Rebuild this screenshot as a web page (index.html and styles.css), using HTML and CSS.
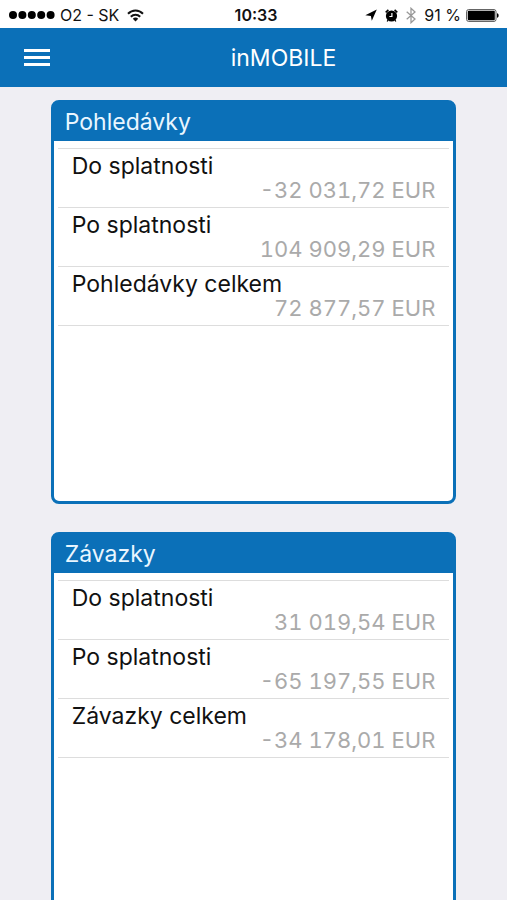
FILE: index.html
```html
<!DOCTYPE html>
<html lang="cs">
<head>
<meta charset="utf-8">
<meta name="viewport" content="width=device-width, initial-scale=1">
<title>inMOBILE</title>
<link rel="stylesheet" href="styles.css">
</head>
<body>
<div class="statusbar">
  <div class="status-side">
    <svg class="dots" width="47" height="10" viewBox="0 0 47 10" aria-hidden="true">
      <circle cx="5" cy="5" r="4"/><circle cx="14.4" cy="5" r="4"/><circle cx="23.8" cy="5" r="4"/><circle cx="33.2" cy="5" r="4"/><circle cx="42.6" cy="5" r="4"/>
    </svg>
    <span class="carrier">O2 - SK</span>
    <svg class="wifi" width="17" height="13" viewBox="0 0 17 13" fill="none" stroke="#111" stroke-width="2" aria-hidden="true">
      <path d="M1 4.8C5.2.5 11.8.5 16 4.8"/><path d="M3.8 7.7c2.7-2.7 6.7-2.7 9.4 0"/><path d="M8.5 12.4 5.8 9.7c1.5-1.5 3.9-1.5 5.4 0z" fill="#111" stroke="none"/>
    </svg>
  </div>
  <span class="clock">10:33</span>
  <div class="status-side status-right">
    <svg width="12" height="12" viewBox="0 0 12 12" aria-hidden="true"><path d="M11.8.4 6.8 11.8 5.9 6.9.3 6.3z"/></svg>
    <svg class="alarm" width="13" height="13" viewBox="0 0 13 13" aria-hidden="true">
      <circle cx="6.5" cy="7" r="5.6"/><path d="M.7 3.4 3.4.9M12.3 3.4 9.6.9" stroke="#000" stroke-width="1.6"/><path d="M3 11.2l-.8 1.3M10 11.2l.8 1.3" stroke="#000" stroke-width="1.3"/><path d="M6.9 3.9v3.6H4.4" fill="none" stroke="#fff" stroke-width="1.2"/>
    </svg>
    <svg class="bluetooth" width="10" height="17" viewBox="0 0 10 17" fill="none" stroke="#999" stroke-width="1.3" aria-hidden="true"><path d="M.7 4.8 9 12l-4 3.7V1.3L9 5 .7 12.2"/></svg>
    <span class="percent">91 %</span>
    <svg width="33" height="13" viewBox="0 0 33 13" aria-hidden="true">
      <rect x=".6" y=".6" width="29.4" height="11.8" rx="2" fill="#fff" stroke="#555" stroke-width="1"/><rect x="1.8" y="1.8" width="27" height="9.4" rx="1"/><path d="M31 4.2c2.2.5 2.2 4.1 0 4.6z"/>
    </svg>
  </div>
</div>
<header class="navbar">
  <button class="menu" type="button" aria-label="Menu"><span></span><span></span><span></span></button>
  <h1>inMOBILE</h1>
</header>
<main>
  <section class="card">
    <h2>Pohledávky</h2>
    <dl>
      <div><dt>Do splatnosti</dt><dd>-32 031,72 EUR</dd></div>
      <div><dt>Po splatnosti</dt><dd>104 909,29 EUR</dd></div>
      <div><dt>Pohledávky celkem</dt><dd>72 877,57 EUR</dd></div>
    </dl>
  </section>
  <section class="card">
    <h2>Závazky</h2>
    <dl>
      <div><dt>Do splatnosti</dt><dd>31 019,54 EUR</dd></div>
      <div><dt>Po splatnosti</dt><dd>-65 197,55 EUR</dd></div>
      <div><dt>Závazky celkem</dt><dd>-34 178,01 EUR</dd></div>
    </dl>
  </section>
</main>
</body>
</html>
```
FILE: styles.css
```css
* {
  box-sizing: border-box;
}

body {
  margin: 0;
  height: 100vh;
  display: flex;
  flex-direction: column;
  background: #efeef3;
  color: #111;
  font-family: Inter, "Liberation Sans", sans-serif;
}

h1, h2, dl, dd {
  margin: 0;
  font-weight: 400;
}

svg {
  flex: none;
}

.statusbar {
  flex: none;
  height: 28px;
  padding: 2px 8px 0;
  display: flex;
  align-items: center;
  background: #fff;
  font-size: 16px;
  white-space: nowrap;
}

.status-side {
  flex: 1 1 0;
  display: flex;
  align-items: center;
  gap: 5px;
}

.status-right {
  justify-content: flex-end;
}

.wifi,
.alarm,
.bluetooth,
.percent {
  margin-left: 3px;
}

.clock {
  padding-left: 5px;
  font-weight: 600;
}

.navbar {
  flex: none;
  height: 59px;
  padding: 0 24px;
  display: grid;
  grid-template-columns: 26px 1fr;
  align-items: center;
  background: #0b70b8;
  color: #fff;
}

.navbar h1 {
  padding-left: 34px;
  text-align: center;
  font-size: 23px;
}

.menu {
  padding: 0;
  display: grid;
  gap: 4px;
  border: 0;
  background: none;
}

.menu span {
  height: 3px;
  background: #fff;
}

main {
  flex: 1;
  min-height: 0;
  padding: 13px 0 28px;
  display: flex;
  flex-direction: column;
  align-items: center;
  gap: 28px;
  overflow-y: auto;
  scrollbar-width: none;
}

.card {
  flex: none;
  width: 80%;
  min-height: 404px;
  border: 3px solid #0b70b8;
  border-radius: 8px;
  background: #fff;
}

.card h2 {
  padding: 0 11px;
  background: #0b70b8;
  color: #e9f6ff;
  font-size: 23px;
  line-height: 38px;
}

dl {
  margin: 7px 4px 0;
  border-top: 1px solid #ddd;
}

dl div {
  padding: 5px 14px;
  border-bottom: 1px solid #ddd;
  font-size: 23px;
  line-height: 24px;
}

dd {
  text-align: right;
  color: #aaa;
  font-size: 22px;
  font-variant-numeric: tabular-nums;
}
```
